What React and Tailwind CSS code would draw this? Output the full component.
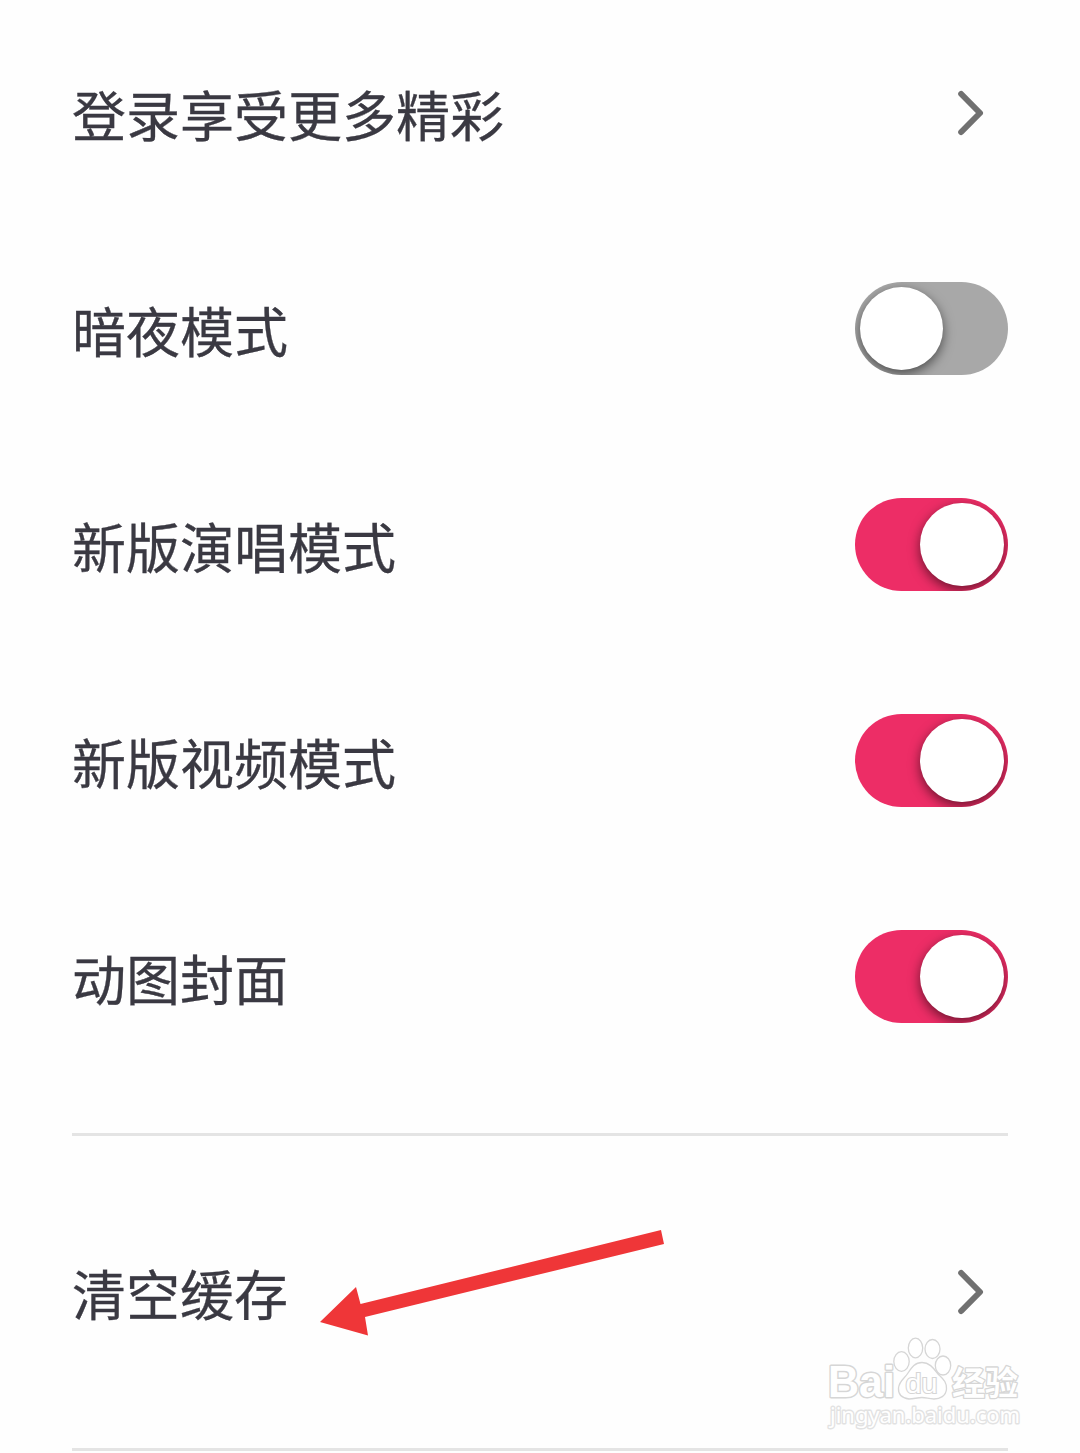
import React, { useState } from "react";
import clsx from "clsx";

const Chevron = () => (
  <svg width="32" height="48" viewBox="0 0 32 48" fill="none" className="mr-[21px]">
    <path
      d="M6.200 5L25 24L6.200 43"
      stroke="#707070"
      strokeWidth="6"
      strokeLinecap="round"
      strokeLinejoin="round"
    />
  </svg>
);

const Toggle = ({ label, defaultOn }) => {
  const [on, setOn] = useState(defaultOn);

  return (
    <button
      role="switch"
      aria-checked={on}
      aria-label={label}
      onClick={() => setOn(!on)}
      className={clsx(
        "flex h-[93px] w-[153px] items-center overflow-hidden rounded-full px-[4.5px]",
        on ? "justify-end bg-[#ed2d66]" : "justify-start bg-[#a8a8a8]"
      )}
    >
      <span className="size-[83.5px] rounded-full bg-white shadow-[0_4px_12px_rgba(0,0,0,0.55)]" />
    </button>
  );
};

const Row = ({ label, children }) => (
  <div className="flex h-[216px] items-center justify-between">
    <span className="pt-[2px] text-[54px] leading-none text-[#3a3942] [-webkit-text-stroke:0.3px_#3a3942]">
      {label}
    </span>
    {children}
  </div>
);

const Arrow = () => (
  <svg
    width="350"
    height="110"
    viewBox="0 0 350 110"
    className="pointer-events-none absolute left-[318px] top-[1228px]"
  >
    <path d="M2 94L38 59L42.500 76L343 2L346 16L47 89L50 107.500Z" fill="#ef3638" />
  </svg>
);

const Watermark = () => (
  <svg
    width="220"
    height="110"
    viewBox="0 0 220 110"
    className="pointer-events-none absolute left-[826px] top-[1334px]"
    fill="#fff"
    stroke="#d6d6d6"
    strokeWidth="1.3"
  >
    <text
      x="2"
      y="63"
      fontSize="44"
      fontWeight="700"
      textLength="67"
      lengthAdjust="spacingAndGlyphs"
      fontFamily="'Liberation Sans', sans-serif"
      strokeWidth="3"
      strokeLinejoin="round"
      paintOrder="stroke"
    >
      Bai
    </text>
    <ellipse cx="75.500" cy="27.500" rx="7.700" ry="9.800" />
    <ellipse cx="89.500" cy="14" rx="7.200" ry="9.800" />
    <ellipse cx="106.500" cy="15" rx="7.500" ry="9.500" />
    <ellipse cx="117" cy="31.500" rx="7.700" ry="9.500" />
    <path d="M96 28.500C104 28.500 108 35 112 40C117 45 121 48 120.500 55C120 62 114 65 108 65C102 65 101 63.500 96 63.500C91 63.500 88 65 83 65C76 64 72 60 72.500 54C73 47 79 44 82 39C86 33 89 28.500 96 28.500Z" />
    <text
      x="79.500"
      y="59"
      fontSize="28"
      textLength="32"
      lengthAdjust="spacingAndGlyphs"
      fontFamily="'Liberation Sans', sans-serif"
      strokeWidth="2.2"
      paintOrder="stroke"
    >
      du
    </text>
    <text
      x="126"
      y="61"
      fontSize="33"
      fontWeight="700"
      fontFamily="'Noto Sans CJK SC', sans-serif"
      strokeWidth="2.6"
      strokeLinejoin="round"
      paintOrder="stroke"
    >
      经验
    </text>
    <text
      x="4"
      y="89"
      fontSize="22"
      textLength="190"
      lengthAdjust="spacingAndGlyphs"
      fontFamily="'Noto Sans', sans-serif"
      stroke="#e2e2e2"
      strokeWidth="2.8"
      strokeLinejoin="round"
      paintOrder="stroke"
    >
      jingyan.baidu.com
    </text>
  </svg>
);

const Divider = () => <div className="h-[3px] bg-[#e4e4e4]" />;

const toggles = [
  { label: "暗夜模式", on: false },
  { label: "新版演唱模式", on: true },
  { label: "新版视频模式", on: true },
  { label: "动图封面", on: true },
];

const App = () => {
  return (
    <main className="relative h-[1453px] w-[1080px] overflow-hidden bg-[#fefefe] px-[72px] pt-[4.5px] font-['Noto_Sans_CJK_SC',sans-serif]">
      <Row label="登录享受更多精彩">
        <Chevron />
      </Row>
      {toggles.map(({ label, on }) => (
        <Row key={label} label={label}>
          <Toggle label={label} defaultOn={on} />
        </Row>
      ))}

      <div className="pt-[48.5px]">
        <Divider />
        <div className="py-12">
          <Row label="清空缓存">
            <Chevron />
          </Row>
        </div>
        <Divider />
      </div>

      <Arrow />
      <Watermark />
    </main>
  );
};

export default App;
